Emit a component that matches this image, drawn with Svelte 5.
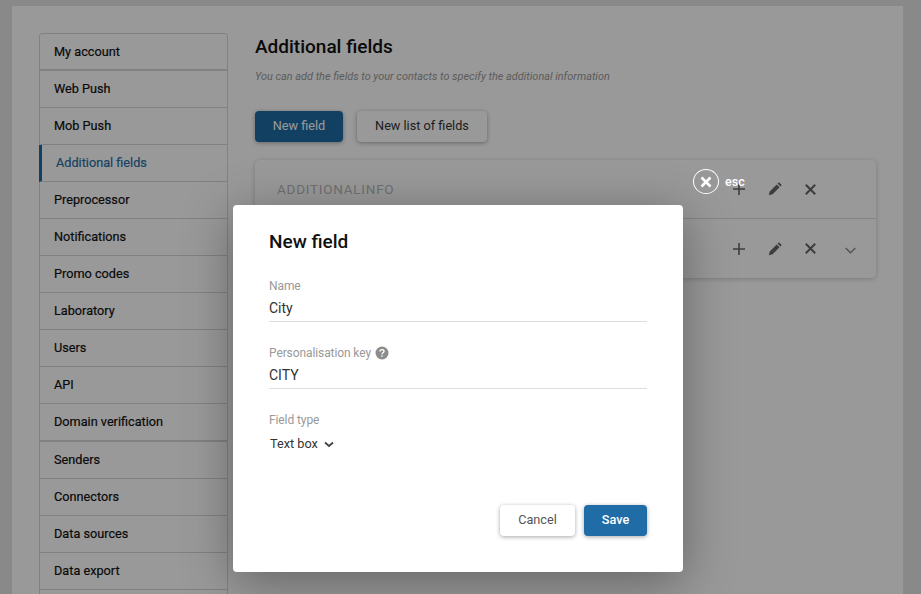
<script>
	const items = [
		{ label: 'My account', thick: true },
		{ label: 'Web Push' },
		{ label: 'Mob Push' },
		{ label: 'Additional fields', active: true },
		{ label: 'Preprocessor' },
		{ label: 'Notifications' },
		{ label: 'Promo codes' },
		{ label: 'Laboratory' },
		{ label: 'Users' },
		{ label: 'API' },
		{ label: 'Domain verification', thick: true, tall: true },
		{ label: 'Senders' },
		{ label: 'Connectors' },
		{ label: 'Data sources' },
		{ label: 'Data export' }
	];
</script>

<div class="page">
	<div class="container">
		<nav class="sidebar">
			{#each items as item}
				<a class="item" class:active={item.active} class:thick={item.thick} class:tall={item.tall} href="#top">{item.label}</a>
			{/each}
		</nav>

		<main class="content">
			<h1>Additional fields</h1>
			<p class="hint">You can add the fields to your contacts to specify the additional information</p>
			<div class="actions">
				<button class="btn primary">New field</button>
				<button class="btn wide">New list of fields</button>
			</div>
			<div class="card">
				<div class="row">
					<span class="row-title">ADDITIONALINFO</span>
					{@render tools(false)}
				</div>
				<div class="row">
					<span class="row-title"></span>
					{@render tools(true)}
				</div>
			</div>
		</main>
	</div>

	<div class="overlay">
		<button class="esc" aria-label="Close">
			<span class="esc-circle">
				<svg width="14" height="14" viewBox="0 0 14 14"><path d="M2.500 2.500l9 9M11.500 2.500l-9 9" stroke="#fff" stroke-width="2.600" /></svg>
			</span>
			<span class="esc-text">esc</span>
		</button>

		<div class="modal">
			<h2>New field</h2>
			<div class="field">
				<span class="label">Name</span>
				<div class="value">City</div>
			</div>
			<div class="field">
				<span class="label">
					Personalisation key
					<svg class="help" width="14" height="14" viewBox="0 0 14 14">
						<circle cx="7" cy="7" r="6.500" fill="#8c8c8c" />
						<path d="M5 5.500c0-1.200.9-1.900 2-1.900s2 .7 2 1.700c0 1.500-2 1.500-2 3" fill="none" stroke="#fff" stroke-width="1.400" />
						<rect x="6.300" y="9.300" width="1.400" height="1.400" fill="#fff" />
					</svg>
				</span>
				<div class="value">CITY</div>
			</div>
			<div class="field">
				<span class="label">Field type</span>
				<div class="select">
					Text box
					<svg width="10" height="7" viewBox="0 0 10 7"><path d="M1 1.500l4 3.500 4-3.500" fill="none" stroke="#444" stroke-width="1.800" /></svg>
				</div>
			</div>
			<div class="footer">
				<button class="btn cancel">Cancel</button>
				<button class="btn save">Save</button>
			</div>
		</div>
	</div>
</div>

{#snippet tools(more)}
	<div class="tools">
		<span class="tool"><svg width="12" height="12" viewBox="0 0 12 12"><path d="M6 0v12M0 6h12" stroke="#666" stroke-width="1.600" /></svg></span>
		<span class="tool"><svg width="14" height="14" viewBox="0 0 14 14"><path d="M.8 13.200l.9-3.800 7-7 2.900 2.900-7 7zM9.500 1.600l.9-.9c.3-.3.700-.3 1 0l1.900 1.900c.3.300.3.700 0 1l-.9.900z" fill="#666" /></svg></span>
		<span class="tool"><svg width="11" height="11" viewBox="0 0 11 11"><path d="M.8.800l9.400 9.400M10.200.800L.8 10.200" stroke="#666" stroke-width="2" /></svg></span>
		{#if more}
			<span class="tool chev"><svg width="11" height="7" viewBox="0 0 11 7"><path d="M.7 1l4.800 4.800L10.300 1" fill="none" stroke="#888" stroke-width="1.300" /></svg></span>
		{/if}
	</div>
{/snippet}

<style>
	:global(body) {
		font-family: Roboto, sans-serif;
		overflow: hidden;
	}

	.page {
		position: relative;
		height: 594px;
		overflow: hidden;
		background: #e5e5e5;
		padding: 6px 18px 0 12px;
		box-sizing: border-box;
	}

	.container {
		display: flex;
		gap: 27px;
		background: #fff;
		height: 100%;
		padding: 27px 27px 0;
		box-sizing: border-box;
	}

	.sidebar {
		width: 189px;
		flex: none;
		display: flex;
		flex-direction: column;
		box-sizing: border-box;
		border: 1px solid #d8d8d8;
		border-radius: 3px;
		height: 620px;
		background: #fff;
	}

	.item {
		display: flex;
		align-items: center;
		height: 37px;
		flex: none;
		box-sizing: border-box;
		padding: 0 14px 1px;
		border-bottom: 1px solid #d8d8d8;
		color: #111;
		font-size: 12.700px;
		font-weight: 400;
		text-decoration: none;
		-webkit-text-stroke: 0.2px #111;
	}

	.item.thick {
		border-bottom-width: 2px;
	}

	.item.tall {
		height: 38px;
	}

	.item.active {
		color: #2a6fa8;
		padding-left: 14px;
		border-left: 3px solid #1f6ca6;
		margin-left: -1px;
		-webkit-text-stroke: 0.2px #2a6fa8;
	}

	.content {
		flex: 1;
		min-width: 0;
	}

	h1 {
		margin: 0;
		font-size: 19px;
		line-height: 28px;
		font-weight: 500;
		color: #111;
	}

	.hint {
		margin: 9px 0 0;
		font-size: 10.900px;
		line-height: 14px;
		font-style: italic;
		color: #999;
	}

	.actions {
		display: flex;
		gap: 14px;
		margin-top: 27px;
	}

	.btn {
		height: 31px;
		border: 0;
		border-radius: 4px;
		font-family: inherit;
		font-size: 12.700px;
		background: #fff;
		color: #333;
		box-shadow: 0 1px 4px rgba(0, 0, 0, 0.35);
		padding: 0 0 2px;
	}

	.primary {
		width: 88px;
		background: #1f6ca6;
		color: #fff;
	}

	.wide {
		width: 130px;
	}

	.card {
		margin-top: 18px;
		width: 621px;
		border-radius: 5px;
		background: #fff;
		box-shadow: 0 1px 5px rgba(0, 0, 0, 0.2);
	}

	.row {
		display: flex;
		align-items: center;
		height: 59px;
		box-sizing: border-box;
		padding-left: 22px;
		border-bottom: 1px solid #ddd;
	}

	.row:last-child {
		border-bottom: 0;
	}

	.row-title {
		flex: 1;
		font-size: 13.500px;
		letter-spacing: 0.750px;
		color: #bbb;
	}

	.tools {
		display: flex;
		align-items: center;
		width: 154.500px;
		flex: none;
	}

	.tool {
		display: flex;
		justify-content: center;
		width: 35.500px;
	}

	.chev {
		margin-left: 5px;
		margin-top: 4px;
	}

	.overlay {
		position: absolute;
		inset: 0;
		background: rgba(0, 0, 0, 0.4);
	}

	.esc {
		position: absolute;
		left: 693px;
		top: 169px;
		display: flex;
		align-items: center;
		gap: 6px;
		background: none;
		border: 0;
		padding: 0;
		color: #fff;
		font-family: inherit;
	}

	.esc-circle {
		display: flex;
		align-items: center;
		justify-content: center;
		width: 26px;
		height: 25px;
		box-sizing: border-box;
		border: 1.500px solid #fff;
		border-radius: 50%;
	}

	.esc-text {
		font-size: 12.500px;
		font-weight: 500;
	}

	.modal {
		position: absolute;
		left: 233px;
		top: 205px;
		width: 450px;
		height: 367px;
		box-sizing: border-box;
		padding: 25px 36px 0;
		background: #fff;
		border-radius: 4px;
		box-shadow: 0 10px 50px rgba(0, 0, 0, 0.35);
		display: flex;
		flex-direction: column;
	}

	h2 {
		margin: 0;
		font-size: 19px;
		line-height: 24px;
		font-weight: 500;
		color: #111;
	}

	.field {
		margin-top: 23px;
	}

	h2 + .field {
		margin-top: 24px;
	}

	.label {
		display: flex;
		align-items: center;
		gap: 4px;
		font-size: 12px;
		letter-spacing: -0.100px;
		line-height: 16px;
		color: #999;
	}

	.value {
		font-size: 14px;
		line-height: 28px;
		height: 28px;
		box-sizing: border-box;
		color: #333;
		border-bottom: 1px solid #ddd;
	}

	.select {
		margin-top: 6px;
		padding-left: 1px;
		display: flex;
		align-items: center;
		gap: 6px;
		font-size: 12.700px;
		line-height: 20px;
		color: #333;
	}

	.footer {
		margin-top: auto;
		margin-bottom: 36px;
		display: flex;
		justify-content: flex-end;
		gap: 9px;
	}

	.cancel {
		width: 75px;
		color: #555;
	}

	.save {
		width: 63px;
		background: #1f6ca6;
		color: #fff;
		font-weight: 500;
	}
</style>
